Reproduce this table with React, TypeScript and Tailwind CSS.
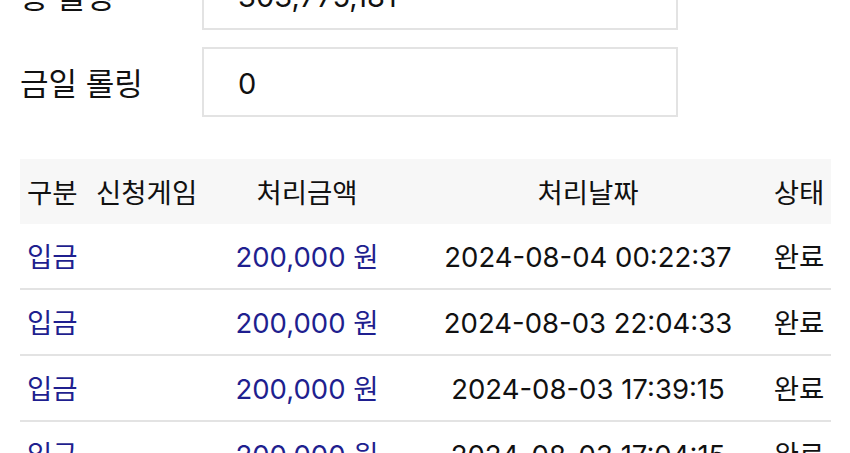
import React from "react";

type Row = { kind: string; game: string; amount: string; date: string; status: string };

const rows: Row[] = [
  { kind: "입금", game: "", amount: "200,000 원", date: "2024-08-04 00:22:37", status: "완료" },
  { kind: "입금", game: "", amount: "200,000 원", date: "2024-08-03 22:04:33", status: "완료" },
  { kind: "입금", game: "", amount: "200,000 원", date: "2024-08-03 17:39:15", status: "완료" },
  { kind: "입금", game: "", amount: "200,000 원", date: "2024-08-03 17:04:15", status: "완료" },
];

const cols = "grid grid-cols-[69px_116px_204px_358px_64px]";

function Field({ label, value }: { label: string; value: string }) {
  return (
    <div className="flex items-center pt-[4px]">
      <div className="w-[182px] text-[31px] text-[#111]">{label}</div>
      <div className="-mt-[4px] flex h-[70px] w-[476px] items-center border-2 border-[#e3e3e3] pl-[34px] pt-[4px] text-[29px] text-[#111]">
        {value}
      </div>
    </div>
  );
}

export default function App() {
  return (
    <div
      className="h-[453px] w-[850px] overflow-hidden bg-white"
      style={{ fontFamily: '"Inter", "Noto Sans CJK KR", sans-serif' }}
    >
      <div className="mt-[-40px] px-5">
        {/* rolling summary */}
        <div className="flex flex-col gap-[17px]">
          <Field label="총 롤링" value="303,775,181" />
          <Field label="금일 롤링" value="0" />
        </div>

        {/* history table */}
        <div className="mt-[42px] w-[811px] text-[27.5px]">
          <div className={`${cols} h-[65px] items-center bg-[#f7f7f7] pt-[4px] text-[#111]`}>
            <div className="pl-[7px]">구분</div>
            <div className="pl-[7px]">신청게임</div>
            <div className="text-center">처리금액</div>
            <div className="text-center">처리날짜</div>
            <div className="text-center">상태</div>
          </div>
          {rows.map((r, i) => (
            <div key={i} className={`${cols} h-[66px] items-center border-b-2 border-[#e3e3e3] pt-[4px]`}>
              <div className="pl-[7px] text-[#1f1f8f]">{r.kind}</div>
              <div className="pl-[7px]">{r.game}</div>
              <div className="text-center text-[#1f1f8f]">{r.amount}</div>
              <div className="text-center text-[#111]">{r.date}</div>
              <div className="text-center text-[#111]">{r.status}</div>
            </div>
          ))}
        </div>
      </div>
    </div>
  );
}
